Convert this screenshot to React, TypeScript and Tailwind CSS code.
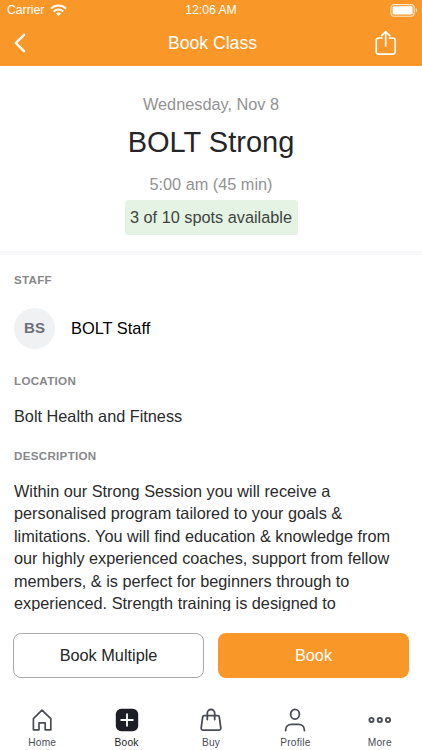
import React from "react";
import clsx from "clsx";

interface TabItem {
  label: string;
  icon: React.ReactNode;
  active?: boolean;
}

const WifiIcon = () => (
  <svg width="17" height="12" viewBox="0 0 17 12" fill="none" stroke="#fff" strokeWidth="2">
    <path d="M1 4.6C5.2.4 11.8.4 16 4.6" />
    <path d="M3.8 7.5c2.7-2.6 6.7-2.6 9.4 0" />
    <path d="M8.5 12 6 9.5c1.4-1.3 3.6-1.3 5 0z" fill="#fff" stroke="none" />
  </svg>
);

const BatteryIcon = () => (
  <svg width="28" height="13" viewBox="0 0 28 13" fill="none">
    <rect x="1" y="0.6" width="23.2" height="11.6" rx="3" stroke="#fff" strokeOpacity="0.75" strokeWidth="1.1" />
    <rect x="2.6" y="2.2" width="20" height="8.4" rx="1.4" fill="#fff" />
    <path d="M25.8 4.3v4.2c1.6-.5 1.6-3.7 0-4.2z" fill="#fff" fillOpacity="0.8" />
  </svg>
);

const BackIcon = () => (
  <svg width="12" height="20" viewBox="0 0 12 20" fill="none" stroke="#fff" strokeWidth="2.4" strokeLinecap="round" strokeLinejoin="round">
    <path d="M10 1.8 1.8 10l8.2 8.2" />
  </svg>
);

const ShareIcon = () => (
  <svg width="22" height="26" viewBox="0 0 22 26" fill="none" stroke="#fff" strokeWidth="1.7" strokeLinecap="round" strokeLinejoin="round">
    <path d="M7 8H3.6A2.4 2.4 0 0 0 1.2 10.4v11.4a2.4 2.4 0 0 0 2.4 2.4h14.2a2.4 2.4 0 0 0 2.4-2.4V10.4A2.4 2.4 0 0 0 17.8 8H14.4" />
    <path d="M10.7 16V1.7M6.7 5.6l4-4 4 4" />
  </svg>
);

const HomeIcon = () => (
  <svg width="24" height="24" viewBox="0 0 24 24" fill="none" stroke="#494c55" strokeWidth="1.7" strokeLinejoin="round">
    <path d="M3.4 21.8V10.6L12 2.2l8.8 8.4v11.2h-5.6v-7H9v7z" />
  </svg>
);

const BookIcon = () => (
  <svg width="24" height="24" viewBox="0 0 24 24" fill="none">
    <rect x="0.8" y="0.8" width="22.4" height="22.4" rx="5.4" fill="#1c1d25" />
    <path d="M12 6.2v11.6M6.2 12h11.6" stroke="#fff" strokeWidth="1.8" strokeLinecap="round" />
  </svg>
);

const BuyIcon = () => (
  <svg width="24" height="24" viewBox="0 0 24 24" fill="none" stroke="#494c55" strokeWidth="1.8" strokeLinecap="round" strokeLinejoin="round">
    <path d="M5.2 7.7h13.6a1.5 1.5 0 0 1 1.5 1.3l1.5 10.9a2 2 0 0 1-2 2.3H4.2a2 2 0 0 1-2-2.3L3.7 9a1.5 1.5 0 0 1 1.5-1.3z" />
    <path d="M8.3 11.5V5.2a3.7 3.7 0 0 1 7.4 0v6.3" />
  </svg>
);

const ProfileIcon = () => (
  <svg width="24" height="24" viewBox="0 0 24 24" fill="none" stroke="#494c55" strokeWidth="1.8" strokeLinecap="round">
    <ellipse cx="12" cy="6.3" rx="4.4" ry="4.9" />
    <path d="M2.6 22.6v-.4c0-3.5 2.6-5.8 6-5.8h6.8c3.4 0 6 2.3 6 5.8v.4" />
  </svg>
);

const MoreIcon = () => (
  <svg width="24" height="24" viewBox="0 0 24 24" fill="none" stroke="#494c55" strokeWidth="1.9">
    <circle cx="3.5" cy="12" r="2.1" />
    <circle cx="11.8" cy="12" r="2.1" />
    <circle cx="20" cy="12" r="2.1" />
  </svg>
);

const tabs: TabItem[] = [
  { label: "Home", icon: <HomeIcon /> },
  { label: "Book", icon: <BookIcon />, active: true },
  { label: "Buy", icon: <BuyIcon /> },
  { label: "Profile", icon: <ProfileIcon /> },
  { label: "More", icon: <MoreIcon /> },
];

const SectionLabel: React.FC<{ children: React.ReactNode }> = ({ children }) => (
  <h2 className="text-[11.6px] leading-4 font-bold tracking-[0.3px] text-[#87888a]">{children}</h2>
);

const Header = () => (
  <header className="h-[66px] shrink-0 bg-[#f99828] text-white">
    <div className="grid h-5 grid-cols-3 items-center pr-1 pl-[7px] text-[12.2px]">
      <div className="flex items-center gap-[6px]">
        <span>Carrier</span>
        <WifiIcon />
      </div>
      <span className="pr-[3px] text-center">12:06 AM</span>
      <div className="flex justify-end">
        <BatteryIcon />
      </div>
    </div>
    <div className="flex h-[46px] items-center justify-between pr-[25px] pl-[14px]">
      <button className="flex w-9" aria-label="Back">
        <BackIcon />
      </button>
      <h1 className="text-[17.6px] leading-6">Book Class</h1>
      <button aria-label="Share">
        <ShareIcon />
      </button>
    </div>
  </header>
);

const ClassSummary = () => (
  <section className="flex h-[189px] shrink-0 flex-col items-center border-b-4 border-[#f8f8fa] pt-[28px]">
    <p className="text-[16.3px] leading-5 text-[#929292]">Wednesday, Nov 8</p>
    <p className="mt-[10px] text-[29px] leading-9 text-[#262628]">BOLT Strong</p>
    <p className="mt-[14px] text-[16.3px] leading-5 text-[#929292]">5:00 am (45 min)</p>
    <p className="mt-[6px] flex h-[35px] w-[173px] items-center justify-center rounded-[3px] bg-[#e5f3e5] text-[16.3px] whitespace-nowrap text-[#3f4440]">
      3 of 10 spots available
    </p>
  </section>
);

const TabBar = () => (
  <nav className="grid h-[49px] grid-cols-5 pt-[7px]">
    {tabs.map((tab) => (
      <div key={tab.label} className="flex flex-col items-center gap-1">
        {tab.icon}
        <span className={clsx("text-[10.2px] leading-[14px] tracking-[0.2px]", tab.active ? "text-[#1c1d25]" : "text-[#494c55]")}>
          {tab.label}
        </span>
      </div>
    ))}
  </nav>
);

export default function App() {
  return (
    <div className="flex h-[750px] w-[422px] flex-col overflow-hidden bg-white font-['Liberation_Sans',Arial,sans-serif]">
      <Header />
      <ClassSummary />
      <main className="h-[356px] shrink-0 overflow-hidden px-[14px] pt-[17px] text-[16.28px] text-[#2b2b2d]">
        <SectionLabel>STAFF</SectionLabel>
        <div className="mt-5 flex items-center gap-4">
          <div className="flex size-[41px] items-center justify-center rounded-full bg-[#f0f1f3] text-[15px] font-bold text-[#6d6f78]">
            BS
          </div>
          <span className="text-[16.4px] text-black">BOLT Staff</span>
        </div>
        <div className="mt-6">
          <SectionLabel>LOCATION</SectionLabel>
        </div>
        <p className="mt-[17px] leading-5">Bolt Health and Fitness</p>
        <div className="mt-[22px]">
          <SectionLabel>DESCRIPTION</SectionLabel>
        </div>
        <p className="mt-4 leading-[22.4px] whitespace-nowrap">
          Within our Strong Session you will receive a<br />
          personalised program tailored to your goals &amp;<br />
          limitations. You will find education &amp; knowledge from<br />
          our highly experienced coaches, support from fellow<br />
          members, &amp; is perfect for beginners through to<br />
          experienced. Strength training is designed to
        </p>
      </main>
      <footer className="pt-[22px]">
        <div className="flex justify-between pr-[13px] pl-[13px] text-[16.3px]">
          <button className="h-[45px] w-[191px] rounded-lg border border-[#a9a9ab] text-[#262628]">Book Multiple</button>
          <button className="h-[45px] w-[191px] rounded-lg bg-[#f99828] text-white">Book</button>
        </div>
        <div className="mt-[23px]">
          <TabBar />
        </div>
      </footer>
    </div>
  );
}
